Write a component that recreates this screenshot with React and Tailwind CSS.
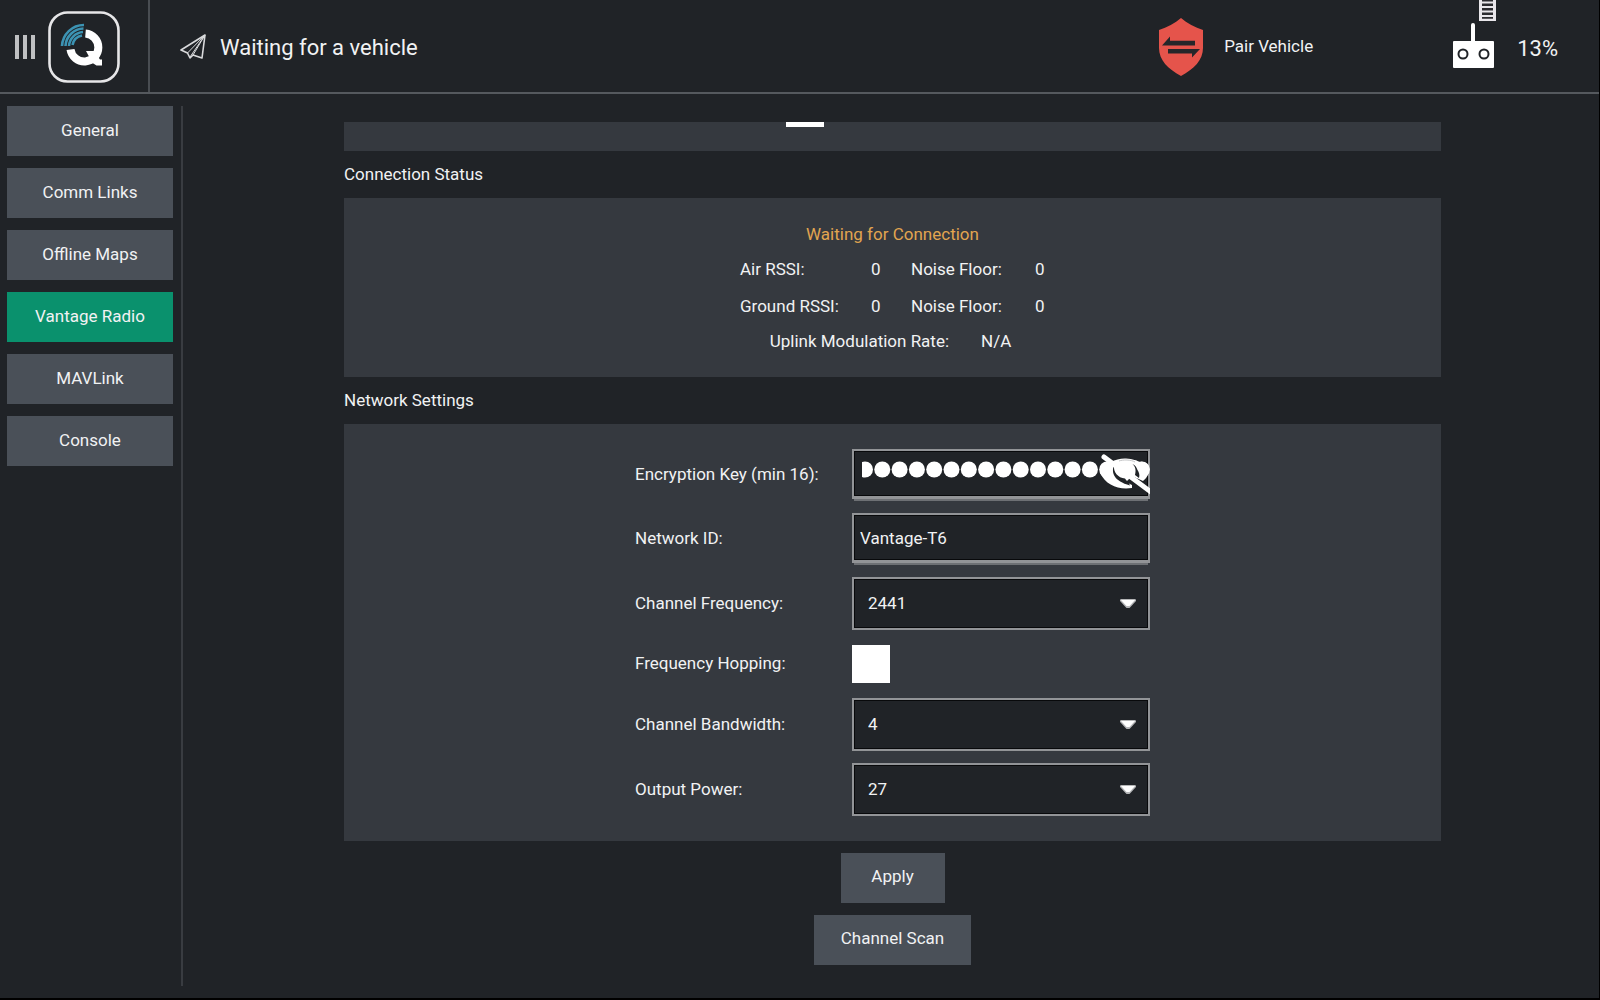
import { useState } from 'react'

const PAGES = ['General', 'Comm Links', 'Offline Maps', 'Vantage Radio', 'MAVLink', 'Console']

const DOTS = Array.from({ length: 17 }, (_, i) => 5 + i * 17.3)

function Logo() {
  return (
    <svg width="72" height="72" viewBox="0 0 72 72" fill="none" aria-hidden="true">
      <rect x="1.5" y="1.5" width="69" height="69" rx="18" stroke="#e6e6e8" strokeWidth="2.6" />
      <g stroke="#3c93b3" strokeWidth="2.6">
        <path d="M14 35A22 22 0 0 1 36 14" />
        <path d="M17.500 35A18.500 18.500 0 0 1 35.500 17.500" />
        <path d="M21 35A15 15 0 0 1 35 21" />
        <path d="M24.500 34A12 12 0 0 1 34 24.500" />
      </g>
      <path d="M37.500 22.500A14 14 0 1 1 22.500 38.500" stroke="#fff" strokeWidth="8" />
      <path d="M38 40h8l6 8.500h2v6h-5.500l-4-2.500z" fill="#fff" />
    </svg>
  )
}

function PaperPlane() {
  return (
    <svg width="26" height="26" viewBox="0 0 26 26" fill="none" stroke="#d9dadc" strokeWidth="1.6" strokeLinejoin="round" aria-hidden="true">
      <path d="M25 1L1 16l6.500 3 2.500 5 3-3 9 3z" />
      <path d="M25 1L7.500 19M25 1L10 23M25 1L13 21" strokeWidth="1" />
    </svg>
  )
}

function Shield() {
  return (
    <svg width="46" height="58" viewBox="0 0 46 58" aria-hidden="true">
      <path d="M23 0C29 5 37 9.500 45 12V30C45 42 36 51 23 58C10 51 1 42 1 30V12C9 9.500 17 5 23 0z" fill="#e5544b" />
      <path d="M4 27.500l8-9v4.300h25v4.700zM42 31l-8 8.500v-4H10V31z" fill="#26262a" />
    </svg>
  )
}

function Controller() {
  return (
    <svg width="44" height="69" viewBox="0 0 44 69" aria-hidden="true">
      <path d="M26 0h17v21H26z" fill="#e8e6ea" />
      <path d="M29 0h11v1.500H29zM29 3.500h11v2.500H29zM29 8h11v2.500H29zM29 12.500h11V15H29zM29 17h11v1.800H29z" fill="#2a2a2e" />
      <rect x="18" y="23" width="4" height="22" rx="2" fill="#fff" />
      <rect y="41" width="41" height="27" rx="1" fill="#fff" />
      <circle cx="10" cy="54" r="4.500" fill="none" stroke="#202327" strokeWidth="2" />
      <circle cx="31" cy="54" r="4.500" fill="none" stroke="#202327" strokeWidth="2" />
    </svg>
  )
}

// Masked characters with the show/hide eye drawn on top of the last ones
function KeyMask() {
  return (
    <svg width="288" height="46" viewBox="2 0 288 46" className="pointer-events-none absolute top-0 -right-0.5" aria-hidden="true">
      <g fill="#fff">
        {DOTS.map((x) => (
          <circle key={x} cx={x} cy="18.500" r="8" />
        ))}
        <path d="M240 22C246 12 256 7 266 7.500C273 8 277 9.500 280 11C285 10 289 13 289.500 18C289 23 286 28 283 30L272 25L266 31L272 34V37C258 39 246 34 240 22z" />
      </g>
      <path d="M254 14C251 22 254 30 270 34.500C269 31 266 29.500 265 27.500C258 27 253 21 254 14z" fill="#202327" />
      <path d="M272.500 13C276 16 276 20 275 24L279 27C280 24 279 21 277.500 19C276.500 16 275 14 272.500 13z" fill="#202327" />
      <path d="M259 10C263 8.500 271 8.500 275 11" fill="none" stroke="#c4c5c7" strokeWidth="1" />
      <path d="M244 6L291 41" fill="none" stroke="#fff" strokeWidth="5" strokeLinecap="round" />
    </svg>
  )
}

function TextField({ id, children, ...props }) {
  return (
    <div className="relative mb-0.5 h-[50px] border-2 border-b-0 border-[#929497] bg-[#202327]">
      <input
        id={id}
        className="block h-full w-full border-b-[3px] border-[#929497] px-1.5 shadow-[inset_0_0_0_1px_#08090b,0_2px_0_#6d7074] outline-none"
        {...props}
      />
      {children}
    </div>
  )
}

function Dropdown({ id, options }) {
  return (
    <div className="relative">
      <select
        id={id}
        className="block h-[53px] w-full appearance-none border-2 border-[#929497] bg-[#202327] px-3.5 shadow-[inset_0_0_0_1px_#08090b] outline-none"
      >
        {options.map((o) => (
          <option key={o}>{o}</option>
        ))}
      </select>
      <svg width="16" height="10" viewBox="0 0 16 10" className="pointer-events-none absolute top-[22px] right-3.5" aria-hidden="true">
        <path d="M0 0.500h16v1.500l-6.500 7h-3L0 2z" fill="#b5b6b8" />
        <path d="M0.500 0.500h15l-6 6.500h-3z" fill="#fff" />
      </svg>
    </div>
  )
}

function PushButton({ children }) {
  return (
    <button type="button" className="h-[50px] min-w-[104px] bg-[#4a5058] px-[27px] pb-0.5">
      {children}
    </button>
  )
}

export default function App() {
  const [page, setPage] = useState('Vantage Radio')
  const [key, setKey] = useState('0123456789abcdef0')
  const [hopping, setHopping] = useState(false)

  return (
    <div className="flex min-h-screen flex-col border-r border-b-2 border-black bg-[#202327] font-['Roboto',sans-serif] text-[17px] text-[#f1f2f3]">
      <header className="flex h-[94px] items-stretch border-b-2 border-[#55595e]">
        <div className="flex w-[150px] items-center gap-[13px] border-r-2 border-[#494d52] pt-0.5 pl-[15px]">
          <button type="button" aria-label="Menu" className="flex gap-1">
            <span className="h-6 w-1 bg-[#bfc0c2]" />
            <span className="h-6 w-1 bg-[#bfc0c2]" />
            <span className="h-6 w-1 bg-[#bfc0c2]" />
          </button>
          <Logo />
        </div>
        <div className="flex flex-1 items-center gap-3.5 pt-0.5 pl-[30px] text-[22px]">
          <PaperPlane />
          <span>Waiting for a vehicle</span>
        </div>
        <div className="flex items-center gap-5 pt-0.5">
          <Shield />
          <span>Pair Vehicle</span>
        </div>
        <div className="ml-[140px] flex gap-5 pr-[41px]">
          <Controller />
          <span className="self-center pt-1 text-[22px]">13%</span>
        </div>
      </header>

      <div className="flex flex-1">
        <nav className="my-3 flex w-[183px] flex-col gap-3 border-r-2 border-[#393c41] pr-2 pl-[7px]">
          {PAGES.map((name) => (
            <button
              key={name}
              type="button"
              onClick={() => setPage(name)}
              className={`h-[50px] ${name === page ? 'bg-[#0a916d]' : 'bg-[#4a5058]'}`}
            >
              {name}
            </button>
          ))}
        </nav>

        <main className="flex flex-1 flex-col pt-7 pr-[158px] pl-[161px]">
          <div className="flex h-[29px] items-start justify-center bg-[#35393f] pr-[176px]">
            <span className="h-[5px] w-[38px] bg-white" />
          </div>

          <h2 className="py-2.5 leading-[27px]">Connection Status</h2>
          <section className="flex h-[179px] flex-col items-center bg-[#35393f] pt-[22px]">
            <p className="leading-7 text-[#e2a550]">Waiting for Connection</p>
            <div className="mt-[7px] grid grid-cols-[101px_10px_94px_10px] gap-x-[30px] gap-y-[9px] leading-7">
              <span>Air RSSI:</span>
              <span>0</span>
              <span>Noise Floor:</span>
              <span>0</span>
              <span>Ground RSSI:</span>
              <span>0</span>
              <span>Noise Floor:</span>
              <span>0</span>
            </div>
            <div className="mt-[7px] flex gap-8 pr-1 leading-7">
              <span>Uplink Modulation Rate:</span>
              <span>N/A</span>
            </div>
          </section>

          <h2 className="py-2.5 leading-[27px]">Network Settings</h2>
          <form
            onSubmit={(e) => e.preventDefault()}
            className="grid grid-cols-[217px_298px] items-center justify-center gap-y-3 bg-[#35393f] py-[25px]"
          >
            <label htmlFor="key">Encryption Key (min 16):</label>
            <TextField
              id="key"
              type="password"
              value={key}
              onChange={(e) => setKey(e.target.value)}
              style={{ color: 'transparent' }}
            >
              <KeyMask />
            </TextField>

            <label htmlFor="network">Network ID:</label>
            <TextField id="network" type="text" defaultValue="Vantage-T6" />

            <label htmlFor="frequency">Channel Frequency:</label>
            <Dropdown id="frequency" options={['2441', '2450', '2462']} />

            <label htmlFor="hopping">Frequency Hopping:</label>
            <div className="flex h-11 items-center">
              <input
                id="hopping"
                type="checkbox"
                checked={hopping}
                onChange={(e) => setHopping(e.target.checked)}
                className="size-[38px] appearance-none bg-white checked:bg-[#0a916d]"
              />
            </div>

            <label htmlFor="bandwidth">Channel Bandwidth:</label>
            <Dropdown id="bandwidth" options={['4', '8']} />

            <label htmlFor="power">Output Power:</label>
            <Dropdown id="power" options={['27', '30']} />
          </form>

          <div className="flex flex-col items-center gap-3 pt-3">
            <PushButton>Apply</PushButton>
            <PushButton>Channel Scan</PushButton>
          </div>
        </main>
      </div>
    </div>
  )
}
